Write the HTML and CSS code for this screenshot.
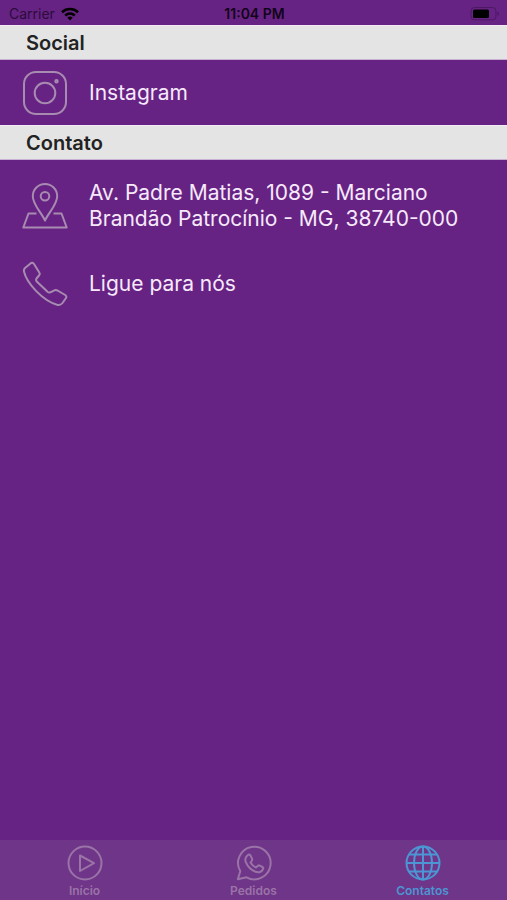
FILE: index.html
```html
<!DOCTYPE html>
<html lang="pt-BR">
<head>
<meta charset="utf-8">
<meta name="viewport" content="width=device-width, initial-scale=1">
<title>Contatos</title>
<link rel="stylesheet" href="styles.css">
</head>
<body>
<header class="status">
  <span class="carrier">Carrier
    <svg width="18" height="14" viewBox="0 0 18 14" aria-hidden="true"><g fill="none" stroke="currentColor" stroke-width="2.6"><path d="M1 5.2C5.500 1 12.500 1 17 5.200"/><path d="M4.200 8.500C7 6 11 6 13.800 8.500"/></g><path d="M6.300 10.500C7.800 9.100 10.200 9.100 11.700 10.500L9 13.400Z" fill="currentColor"/></svg>
  </span>
  <time class="clock">11:04 PM</time>
  <svg class="battery" width="30" height="14" viewBox="0 0 30 14" aria-hidden="true"><rect x="1" y=".5" width="25" height="12.400" rx="3.500" fill="none" stroke="#4d1766"/><rect x="3" y="2.400" width="16" height="8.600" rx="1.500" fill="#000"/><path d="M27.500 4.700v4c2-.6 2-3.400 0-4z" fill="#4d1766"/></svg>
</header>
<main class="content">
  <section>
    <h2 class="heading">Social</h2>
    <a class="row" href="#instagram">
      <svg class="icon" viewBox="0 0 46 46" aria-hidden="true"><rect x="2" y="2" width="42" height="42" rx="12"/><circle cx="23" cy="23" r="10.300"/><circle cx="34.500" cy="11.300" r="1.200"/></svg>
      <span>Instagram</span>
    </a>
  </section>
  <section>
    <h2 class="heading">Contato</h2>
    <a class="row row-tall" href="#mapa">
      <svg class="icon" viewBox="0 0 46 46" aria-hidden="true"><path d="M23 37.500C19 29 10.800 21.500 10.800 13.200a12.200 12.200 0 0 1 24.400 0C35.200 21.500 27 29 23 37.500Z"/><circle cx="23" cy="13.200" r="4.300"/><path d="M14.500 30.500H6.500L1.300 44.500H44.700L39.500 30.500H31.500"/></svg>
      <span>Av. Padre Matias, 1089 - Marciano Brandão Patrocínio - MG, 38740-000</span>
    </a>
    <a class="row" href="#telefone">
      <svg class="icon" viewBox="0 0 46 46" aria-hidden="true"><path d="M8.500 2.400Q10.500.9 12 3L17.300 11.500Q18.300 13 17 14.500L14.500 17.500Q13.700 19 14.500 20.200L25.500 30.800Q26.800 31.800 28.300 31.400L32.500 29.300Q34 28.700 35.500 29.500L43.200 34Q45 35.200 44 37L40.500 42Q38.500 44.500 35 43.700C20.500 39.500 4.500 22 2 10.500Q1.500 8.500 3 7Z"/></svg>
      <span>Ligue para nós</span>
    </a>
  </section>
</main>
<nav class="tabs">
  <a class="tab" href="#inicio">
    <svg class="tab-icon" viewBox="0 0 36 36" aria-hidden="true"><circle cx="18" cy="18" r="16.500"/><path d="M13 10.500V26L27 18.200Z"/></svg>
    <span>Início</span>
  </a>
  <a class="tab" href="#pedidos">
    <svg class="tab-icon" viewBox="0 0 36 36" aria-hidden="true"><path d="M1.800 34.200L4.300 26.300A16.300 16.300 0 1 1 10.500 32.300Z"/><path d="M11.600 10.300Q13.500 8.800 14.500 10.500L16.200 14Q16.500 15 15.700 16L14.500 17.500Q16.500 21 20 22.500L22 20.700Q22.800 20.100 23.800 20.600L26.500 22Q27.700 22.700 27 24.200C26 27 22.500 28 19.500 26.700C14.500 25 11.500 21.200 9.800 17.200Q8.300 13 11.600 10.300Z"/></svg>
    <span>Pedidos</span>
  </a>
  <a class="tab tab-active" href="#contatos" aria-current="page">
    <svg class="tab-icon" viewBox="0 0 36 36" aria-hidden="true"><circle cx="18" cy="18" r="16.500"/><ellipse cx="18" cy="18" rx="9" ry="16.500"/><path d="M18 1.500V34.500M1.500 18H34.500M4 9.500H32M4 26.500H32"/></svg>
    <span>Contatos</span>
  </a>
</nav>
</body>
</html>
```
FILE: styles.css
```css
* { box-sizing: border-box; }

body {
  margin: 0;
  min-height: 100vh;
  display: flex;
  flex-direction: column;
  background: #662383;
  color: #f7e9fb;
  font-family: Inter, "Liberation Sans", sans-serif;
}

a { color: inherit; text-decoration: none; }

.status {
  display: grid;
  grid-template-columns: 1fr auto 1fr;
  align-items: center;
  height: 25px;
  padding: 2px 7px 0 9px;
  font-size: 14px;
  color: #12031a;
}

.carrier { display: flex; align-items: center; gap: 6px; color: #2b0c3b; }
.carrier svg { color: #000; }
.clock { font-weight: 600; }
.battery { justify-self: end; }

.content { flex: 1; }

.heading {
  margin: 0;
  height: 35px;
  padding: 0 26px;
  border-top: 1px solid #f3eaf5;
  border-bottom: 1px solid #c9b0d3;
  background: #e4e4e4;
  color: #222;
  font-size: 20px;
  line-height: 34px;
  font-weight: 600;
}

.row {
  display: flex;
  align-items: center;
  gap: 21px;
  min-height: 65px;
  padding: 0 22px;
  font-size: 21px;
  line-height: 26px;
}

.row-tall { min-height: 91px; }

.icon {
  flex: none;
  width: 46px;
  height: 46px;
  fill: none;
  stroke: #a88bb0;
  stroke-width: 2;
  stroke-linejoin: round;
}

.tabs {
  display: grid;
  grid-template-columns: repeat(3, 1fr);
  height: 60px;
  background: #6f3588;
}

.tab {
  display: flex;
  flex-direction: column;
  align-items: center;
  padding-top: 5px;
  gap: 2px;
  color: #9a73a7;
  font-size: 12px;
  line-height: 16px;
  font-weight: 600;
}

.tab-active { color: #4b96d3; }

.tab-icon {
  width: 36px;
  height: 36px;
  fill: none;
  stroke: currentColor;
  stroke-width: 2;
  stroke-linejoin: round;
}
```
